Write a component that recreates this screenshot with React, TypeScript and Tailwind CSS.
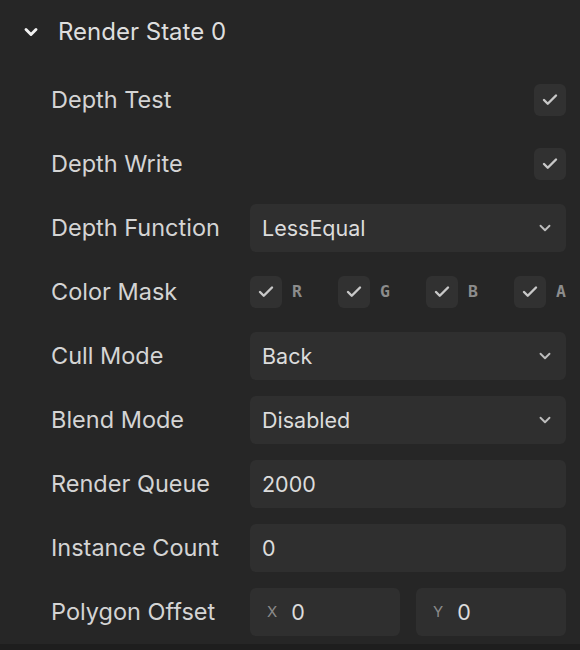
import { ChevronDown, Check } from "lucide-react";

const font = { fontFamily: "Inter, 'Noto Sans', sans-serif" };

function Row({ label, children }: { label: string; children: React.ReactNode }) {
  return (
    <div className="flex h-12 items-center">
      <div className="w-[199px] shrink-0 text-[23.5px] text-[#d4d4d4]">{label}</div>
      <div className="flex flex-1 items-center">{children}</div>
    </div>
  );
}

function Box({ children }: { children: React.ReactNode }) {
  return (
    <div className="flex h-12 w-full items-center rounded-md bg-[#2f2f2f] px-3 text-[21.5px] text-[#dcdcdc]">
      {children}
    </div>
  );
}

function Select({ value }: { value: string }) {
  return (
    <Box>
      <span className="flex-1">{value}</span>
      <ChevronDown size={18} strokeWidth={2.5} className="text-[#bdbdbd]" />
    </Box>
  );
}

function CheckBox() {
  return (
    <div className="flex h-8 w-8 items-center justify-center rounded-md bg-[#313131]">
      <Check size={18} strokeWidth={3.25} className="text-[#c8c8c8]" />
    </div>
  );
}

export default function App() {
  return (
    <div className="min-h-[650px] bg-[#1e1e1e]" style={font}>
      <div className="bg-[#262626] pb-2">
        {/* Header */}
        <div className="flex h-16 items-center pl-[21px]">
          <ChevronDown size={20} strokeWidth={3.5} className="text-[#f0f0f0]" />
          <span className="ml-[17px] text-[24px] text-[#dedede]">Render State 0</span>
        </div>

        <div className="flex flex-col gap-4 pt-3 pl-[51px] pr-[14px]">
          <Row label="Depth Test">
            <div className="flex-1" />
            <CheckBox />
          </Row>
          <Row label="Depth Write">
            <div className="flex-1" />
            <CheckBox />
          </Row>
          <Row label="Depth Function">
            <Select value="LessEqual" />
          </Row>
          <Row label="Color Mask">
            <div className="flex w-full items-center justify-between">
              {["R", "G", "B", "A"].map((c) => (
                <div key={c} className="flex items-center gap-[10px]">
                  <CheckBox />
                  <span
                    className="text-[16.5px] font-semibold text-[#8c8c8c]"
                    style={{ fontFamily: "'DejaVu Sans Mono', monospace" }}
                  >
                    {c}
                  </span>
                </div>
              ))}
            </div>
          </Row>
          <Row label="Cull Mode">
            <Select value="Back" />
          </Row>
          <Row label="Blend Mode">
            <Select value="Disabled" />
          </Row>
          <Row label="Render Queue">
            <Box>2000</Box>
          </Row>
          <Row label="Instance Count">
            <Box>0</Box>
          </Row>
          <Row label="Polygon Offset">
            <div className="flex w-full gap-4">
              <div className="flex h-12 flex-1 items-center rounded-md bg-[#2f2f2f] pl-[17px] text-[21.5px] text-[#dcdcdc]">
                <span className="mr-[14px] text-[15px] text-[#8a8a8a]">X</span>0
              </div>
              <div className="flex h-12 flex-1 items-center rounded-md bg-[#2f2f2f] pl-[17px] text-[21.5px] text-[#dcdcdc]">
                <span className="mr-[14px] text-[15px] text-[#8a8a8a]">Y</span>0
              </div>
            </div>
          </Row>
        </div>
      </div>
    </div>
  );
}
